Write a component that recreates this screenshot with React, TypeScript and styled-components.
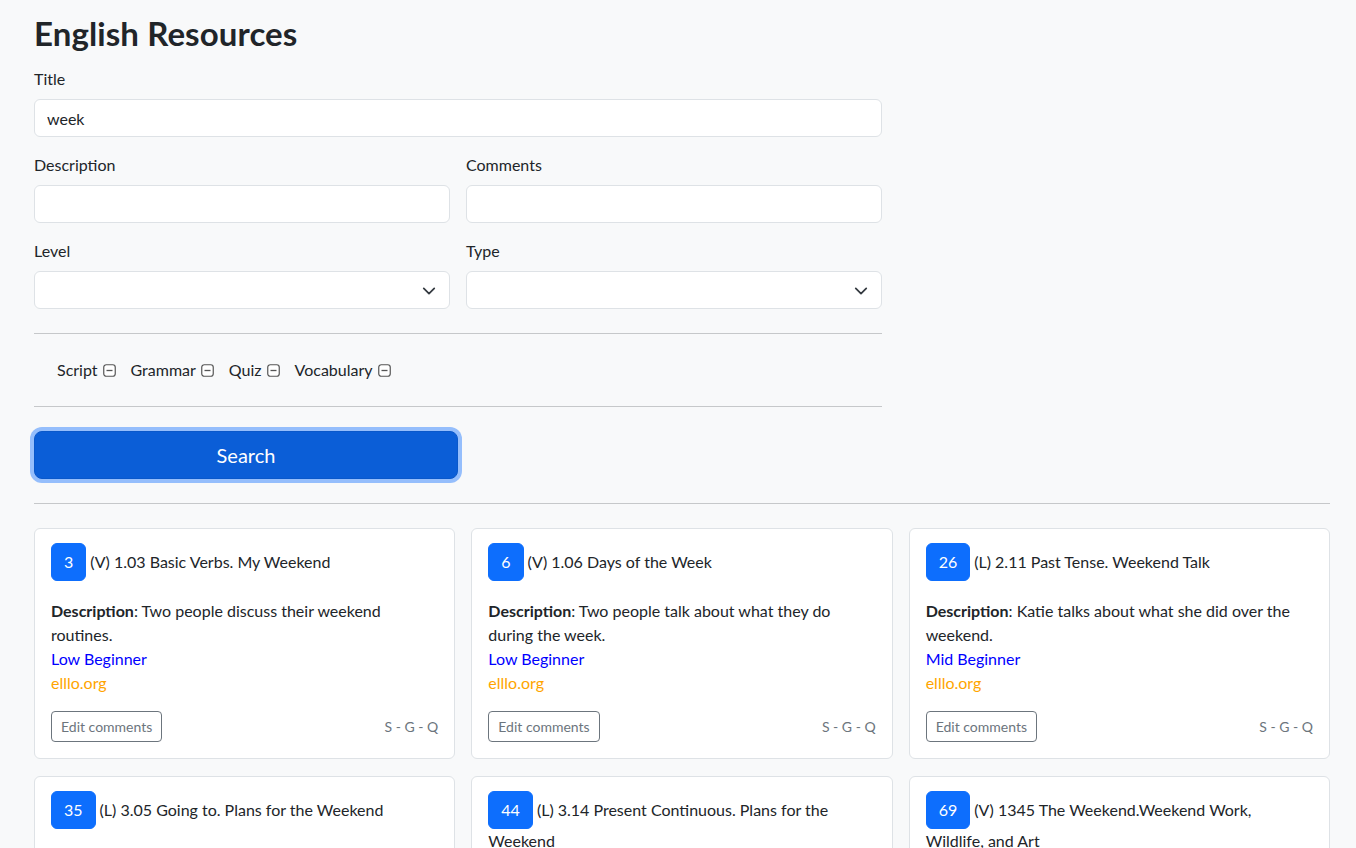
import React from "react";
import styled, { createGlobalStyle } from "styled-components";

const Global = createGlobalStyle`
  * { box-sizing: border-box; }
  body {
    margin: 0;
    background: #f8f9fa;
    color: #212529;
    font-family: "Lato", "Noto Sans", sans-serif;
    font-size: 16px;
    line-height: 1.5;
  }
`;

const Page = styled.div`
  padding: 14px 26px 0 34px;
`;

const Heading = styled.h2`
  margin: 0 0 15px;
  font-size: 33px;
  font-weight: 700;
  line-height: 38px;
  letter-spacing: 0.1px;
`;

const Form = styled.div`
  width: 848px;
`;

const Field = styled.div`
  margin-bottom: 16px;
`;

const Row = styled.div`
  display: grid;
  grid-template-columns: 1fr 1fr;
  gap: 16px;
`;

const Label = styled.label`
  display: block;
  margin-bottom: 8px;
`;

const Input = styled.input`
  display: block;
  width: 100%;
  height: 38px;
  padding: 6px 12px;
  font: inherit;
  color: #212529;
  background: #fff;
  border: 1px solid #dee2e6;
  border-radius: 6px;
  outline: none;
`;

const SelectBox = styled.div`
  position: relative;
  height: 38px;
  background: #fff;
  border: 1px solid #dee2e6;
  border-radius: 6px;
`;

const Chevron = styled.svg`
  position: absolute;
  right: 13px;
  top: 12px;
`;

const Rule = styled.hr`
  margin: 24px 0;
  border: 0;
  border-top: 1px solid #c6c8ca;
`;

const Checks = styled.div`
  display: flex;
  align-items: center;
  height: 24px;
  padding-left: 23px;
  gap: 15px;
`;

const CheckItem = styled.span`
  display: inline-flex;
  align-items: center;
  gap: 5px;
`;

const SearchButton = styled.button`
  display: block;
  width: 424px;
  height: 48px;
  font: inherit;
  font-size: 20px;
  color: #fff;
  background: #0b5ed7;
  border: 1px solid #0a58ca;
  border-radius: 8px;
  box-shadow: 0 0 0 4px rgba(49, 132, 253, 0.5);
  margin-top: 1px;
`;

const Cards = styled.div`
  display: grid;
  grid-template-columns: repeat(3, 1fr);
  gap: 17px 16px;
  margin-top: 24px;
`;

const Card = styled.div`
  background: #fff;
  border: 1px solid #dee2e6;
  border-radius: 6px;
  padding: 14px 16px 16px;
  display: flex;
  flex-direction: column;
`;

const CardTitle = styled.div`
  margin-bottom: 18px;
`;

const IdBadge = styled.span`
  display: inline-block;
  padding: 6px 12px;
  margin-right: 4px;
  color: #fff;
  background: #0d6efd;
  border: 1px solid #0d6efd;
  border-radius: 6px;
  line-height: 24px;
`;

const Desc = styled.div``;

const LevelText = styled.div`
  color: #0000ff;
`;

const Site = styled.div`
  color: #ffa500;
`;

const Footer = styled.div`
  margin-top: auto;
  padding-top: 16px;
  display: flex;
  justify-content: space-between;
  align-items: center;
`;

const EditButton = styled.button`
  height: 31px;
  font: inherit;
  font-size: 14px;
  line-height: 21px;
  padding: 4px 9px;
  color: #6c757d;
  background: transparent;
  border: 1px solid #6c757d;
  border-radius: 4px;
`;

const Tags = styled.span`
  font-size: 14px;
  color: #6c757d;
`;

const DashIcon = () => (
  <svg width="13" height="13" viewBox="0 0 13 13">
    <rect x="0.75" y="0.75" width="11.5" height="11.5" rx="2.5" fill="#fff" stroke="#555" strokeWidth="1.2" />
    <line x1="3.5" y1="6.5" x2="9.5" y2="6.5" stroke="#555" strokeWidth="1.3" />
  </svg>
);

const Select = () => (
  <SelectBox>
    <Chevron width="14" height="14" viewBox="0 0 16 16">
      <path d="M2 5l6 6 6-6" fill="none" stroke="#343a40" strokeWidth="2" strokeLinecap="round" strokeLinejoin="round" />
    </Chevron>
  </SelectBox>
);

type Res = { id: number; title: string; desc: string; level: string; site: string };

const resources: Res[] = [
  { id: 3, title: "(V) 1.03 Basic Verbs. My Weekend", desc: "Two people discuss their weekend routines.", level: "Low Beginner", site: "elllo.org" },
  { id: 6, title: "(V) 1.06 Days of the Week", desc: "Two people talk about what they do during the week.", level: "Low Beginner", site: "elllo.org" },
  { id: 26, title: "(L) 2.11 Past Tense. Weekend Talk", desc: "Katie talks about what she did over the weekend.", level: "Mid Beginner", site: "elllo.org" },
  { id: 35, title: "(L) 3.05 Going to. Plans for the Weekend", desc: "Two people talk about their plans for the weekend.", level: "High Beginner", site: "elllo.org" },
  { id: 44, title: "(L) 3.14 Present Continuous. Plans for the Weekend", desc: "A person talks about what he is doing this weekend.", level: "High Beginner", site: "elllo.org" },
  { id: 69, title: "(V) 1345 The Weekend.Weekend Work, Wildlife, and Art", desc: "People talk about what they do on the weekend.", level: "Intermediate", site: "elllo.org" },
];

export default function App() {
  return (
    <>
      <Global />
      <Page>
        <Heading>English Resources</Heading>
        <Form>
          <Field>
            <Label>Title</Label>
            <Input defaultValue="week" />
          </Field>
          <Row>
            <Field>
              <Label>Description</Label>
              <Input />
            </Field>
            <Field>
              <Label>Comments</Label>
              <Input />
            </Field>
          </Row>
          <Row>
            <div>
              <Label>Level</Label>
              <Select />
            </div>
            <div>
              <Label>Type</Label>
              <Select />
            </div>
          </Row>
          <Rule />
          <Checks>
            {["Script", "Grammar", "Quiz", "Vocabulary"].map((c) => (
              <CheckItem key={c}>
                {c}
                <DashIcon />
              </CheckItem>
            ))}
          </Checks>
          <Rule />
          <SearchButton>Search</SearchButton>
        </Form>
        <Rule />
        <Cards>
          {resources.map((r) => (
            <Card key={r.id}>
              <CardTitle>
                <IdBadge>{r.id}</IdBadge>
                {r.title}
              </CardTitle>
              <Desc>
                <b>Description</b>: {r.desc}
              </Desc>
              <LevelText>{r.level}</LevelText>
              <Site>{r.site}</Site>
              <Footer>
                <EditButton>Edit comments</EditButton>
                <Tags>S - G - Q</Tags>
              </Footer>
            </Card>
          ))}
        </Cards>
      </Page>
    </>
  );
}
